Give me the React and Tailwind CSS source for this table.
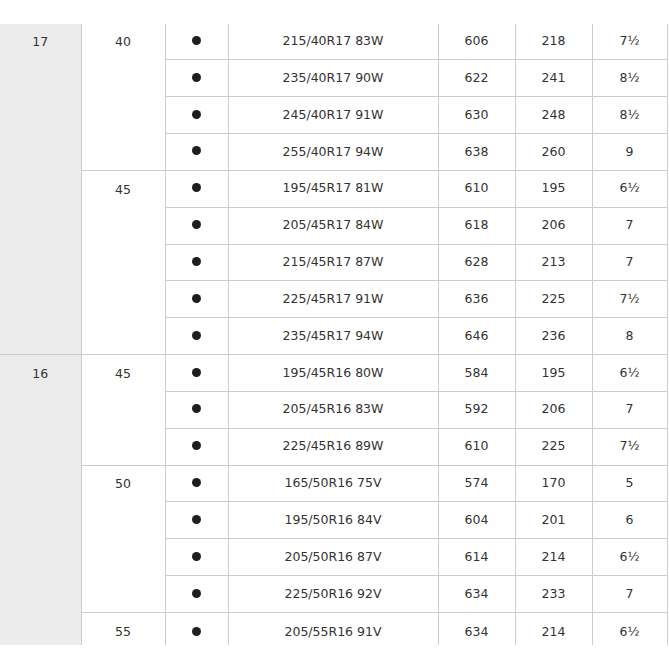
import React from "react";

const data = [
  {
    rim: "17",
    groups: [
      {
        ar: "40",
        rows: [
          ["215/40R17 83W", "606", "218", "7½"],
          ["235/40R17 90W", "622", "241", "8½"],
          ["245/40R17 91W", "630", "248", "8½"],
          ["255/40R17 94W", "638", "260", "9"],
        ],
      },
      {
        ar: "45",
        rows: [
          ["195/45R17 81W", "610", "195", "6½"],
          ["205/45R17 84W", "618", "206", "7"],
          ["215/45R17 87W", "628", "213", "7"],
          ["225/45R17 91W", "636", "225", "7½"],
          ["235/45R17 94W", "646", "236", "8"],
        ],
      },
    ],
  },
  {
    rim: "16",
    groups: [
      {
        ar: "45",
        rows: [
          ["195/45R16 80W", "584", "195", "6½"],
          ["205/45R16 83W", "592", "206", "7"],
          ["225/45R16 89W", "610", "225", "7½"],
        ],
      },
      {
        ar: "50",
        rows: [
          ["165/50R16 75V", "574", "170", "5"],
          ["195/50R16 84V", "604", "201", "6"],
          ["205/50R16 87V", "614", "214", "6½"],
          ["225/50R16 92V", "634", "233", "7"],
        ],
      },
      {
        ar: "55",
        rows: [["205/55R16 91V", "634", "214", "6½"]],
      },
    ],
  },
];

const cell = "border border-[#cccccc] p-0 text-center align-middle h-[36.85px]";

export default function App() {
  const trs = [];
  data.forEach((r) => {
    const total = r.groups.reduce((s, g) => s + g.rows.length, 0);
    r.groups.forEach((g, gi) => {
      g.rows.forEach((row, ri) => {
        trs.push(
          <tr key={r.rim + g.ar + ri}>
            {gi === 0 && ri === 0 && (
              <td
                rowSpan={total}
                className="border-b border-r border-[#cccccc] border-l-0 bg-[#ececec] p-0 align-top text-center"
              >
                <div className="h-[38px] flex items-center justify-center">{r.rim}</div>
              </td>
            )}
            {ri === 0 && (
              <td rowSpan={g.rows.length} className="border border-[#cccccc] p-0 align-top text-center">
                <div className="h-[38px] flex items-center justify-center">{g.ar}</div>
              </td>
            )}
            <td className={cell}>
              <div className="flex items-center justify-center -mt-[2px]">
                <span className="block w-[9px] h-[9px] rounded-full bg-[#1e1e1e]" />
              </div>
            </td>
            <td className={cell}>{row[0]}</td>
            <td className={cell}>{row[1]}</td>
            <td className={cell}>{row[2]}</td>
            <td className={cell}>{row[3]}</td>
          </tr>
        );
      });
    });
  });
  return (
    <div className="w-[669px] h-[669px] bg-white overflow-hidden pt-[24px]">
      <div className="h-[621px] overflow-hidden">
        <table
          className="-mt-[1px] border-collapse table-fixed w-[667px] text-[12.5px] text-[#333333]"
          style={{ fontFamily: '"DejaVu Sans", Verdana, sans-serif' }}
        >
          <colgroup>
            <col className="w-[81px]" />
            <col className="w-[84px]" />
            <col className="w-[63px]" />
            <col className="w-[210px]" />
            <col className="w-[77px]" />
            <col className="w-[77px]" />
            <col className="w-[75px]" />
          </colgroup>
          <tbody className="[&>tr:first-child>td]:border-t-0">{trs}</tbody>
        </table>
      </div>
    </div>
  );
}
